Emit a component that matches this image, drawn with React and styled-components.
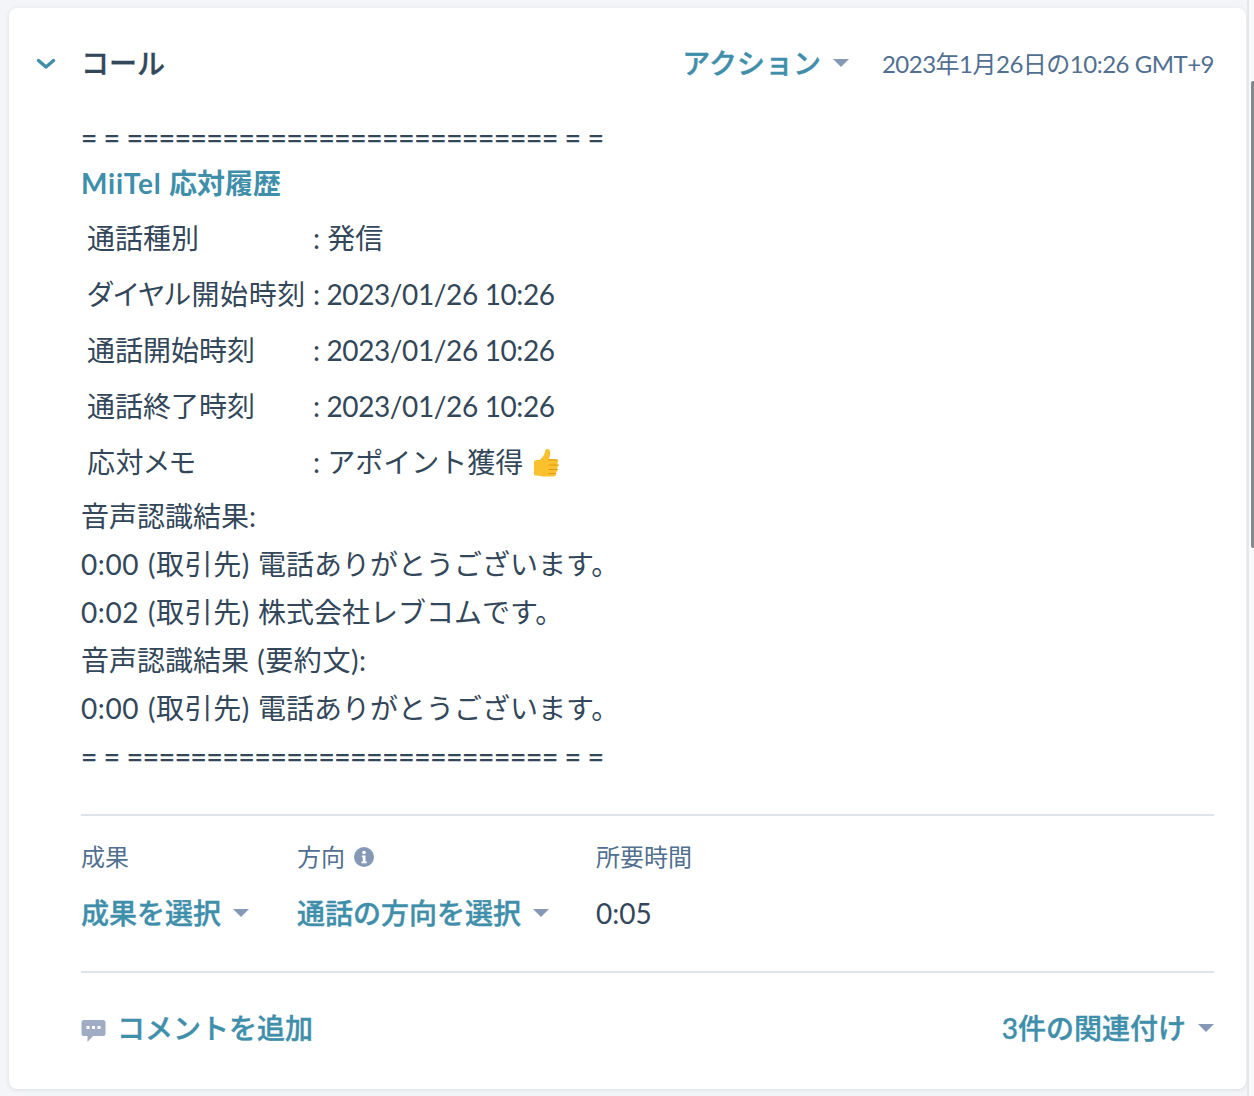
import React from "react";
import styled, { createGlobalStyle } from "styled-components";

const GlobalStyle = createGlobalStyle`
  html, body {
    margin: 0;
    height: 1096px;
    overflow: hidden;
    background: #f3f5f8;
  }
  body {
    font-family: Lato, "Noto Sans CJK JP", sans-serif;
    color: #33475b;
  }
`;

const Page = styled.div`
  position: relative;
  box-sizing: border-box;
  height: 1096px;
  padding: 8px 8px 0 9px;
`;

const ScrollTrack = styled.div`
  position: absolute;
  top: 0;
  right: 0;
  bottom: 0;
  box-sizing: border-box;
  width: 7px;
  background: #f8f9fa;
  border-left: 2px solid #e6e7ea;
`;

const ScrollThumb = styled.div`
  position: absolute;
  top: 81px;
  right: 0;
  width: 3px;
  height: 467px;
  border-radius: 2px 0 0 2px;
  background: #85888c;
`;

const Card = styled.section`
  box-sizing: border-box;
  height: 1081px;
  padding: 0 32px 0 27px;
  background: #fff;
  border-radius: 8px;
  box-shadow: 0 1px 4px rgba(45, 62, 80, 0.12);
`;

const Header = styled.header`
  display: flex;
  align-items: center;
  height: 112px;
`;

const Chevron = styled.svg`
  width: 20px;
  height: 12px;
  margin-right: 25px;
  color: #3f8fab;
`;

const Title = styled.h2`
  flex: 1;
  margin: 0 0 2px;
  font-size: 28px;
  font-weight: 500;
  line-height: 40px;
  -webkit-text-stroke: 0.35px currentColor;
`;

const Link = styled.span`
  font-size: 28px;
  font-weight: 500;
  line-height: 40px;
  color: #3f8fab;
  white-space: nowrap;
  -webkit-text-stroke: 0.4px currentColor;
`;

const Caret = styled.i`
  display: inline-block;
  width: 0;
  height: 0;
  margin: 0 0 8px 12px;
  vertical-align: middle;
  border-style: solid;
  border-width: 8px 8px 0;
  border-color: #8599b6 transparent transparent;
`;

const ActionLink = styled(Link)`
  margin: 0 33px 2px 0;
`;

const Timestamp = styled.span`
  font-size: 24px;
  line-height: 40px;
  letter-spacing: -0.5px;
  color: #516f90;
  white-space: nowrap;
`;

const Body = styled.div`
  padding-left: 45px;
`;

const Rule = styled.div`
  margin-top: ${(props) => props.$top || 0}px;
  font-size: 28px;
  line-height: 48px;
  letter-spacing: -0.27px;
  white-space: pre;
  -webkit-text-stroke: 0.3px currentColor;
`;

const Heading = styled.div`
  margin-bottom: 5px;
  font-size: 28px;
  font-weight: 700;
  line-height: 44px;
  color: #3f8fab;
`;

const HeadingLatin = styled.span`
  letter-spacing: 0.8px;
`;

const Table = styled.table`
  margin-bottom: 2px;
  border-collapse: collapse;
  font-size: 28px;
  line-height: 48px;
`;

const Cell = styled.td`
  padding: 4px 5px;
  white-space: nowrap;
`;

const KeyCell = styled(Cell)`
  box-sizing: content-box;
  width: 221px;
  padding: 4px 0 4px 6px;
  font-feature-settings: "palt";
  letter-spacing: ${(props) => (props.$kana ? "0.6px" : "0")};
`;

const DateCell = styled(Cell)`
  letter-spacing: -0.38px;
`;

const Line = styled.div`
  font-size: 28px;
  line-height: 48px;
  word-spacing: 1px;
`;

const Stamp = styled.span`
  letter-spacing: 0.6px;
`;

const Thumb = styled.svg`
  width: 30px;
  height: 30px;
  margin-left: 8px;
  vertical-align: -5px;
`;

const Divider = styled.hr`
  margin: ${(props) => props.$top || 0}px 0 0 45px;
  border: 0;
  border-top: 2px solid #dfe3eb;
`;

const Properties = styled.div`
  display: flex;
  box-sizing: border-box;
  height: 155px;
  margin-left: 45px;
  padding-top: 19px;
`;

const Property = styled.div`
  width: ${(props) => props.$width}px;
`;

const PropertyLabel = styled.div`
  display: flex;
  align-items: center;
  gap: 9px;
  height: 40px;
  font-size: 24px;
  color: #516f90;
`;

const PropertyValue = styled.div`
  margin-top: 18px;
  font-size: 28px;
  line-height: 40px;
`;

const InfoIcon = styled.svg`
  width: 20px;
  height: 20px;
  margin-top: 4px;
`;

const Footer = styled.div`
  display: flex;
  align-items: center;
  justify-content: space-between;
  height: 110px;
  margin-left: 45px;
`;

const Comment = styled.div`
  display: flex;
  align-items: center;
  gap: 11px;
`;

const CommentIcon = styled.svg`
  width: 25px;
  height: 24px;
  margin-top: 6px;
`;

const SEP = "= = =========================== = =";

export default function App() {
  return (
    <Page>
      <GlobalStyle />
      <Card>
        <Header>
          <Chevron viewBox="0 0 20 12" fill="none">
            <path d="M2.500 2.500 10 9l7.500-6.500" stroke="currentColor" strokeWidth="3.4" strokeLinecap="round" strokeLinejoin="round" />
          </Chevron>
          <Title>コール</Title>
          <ActionLink>アクション<Caret /></ActionLink>
          <Timestamp>2023年1月26日の10:26 GMT+9</Timestamp>
        </Header>
        <Body>
          <Rule $top={-7}>{SEP}</Rule>
          <Heading><HeadingLatin>MiiTel </HeadingLatin>応対履歴</Heading>
          <Table>
            <tbody>
              <tr><KeyCell>通話種別</KeyCell><Cell>: 発信</Cell></tr>
              <tr><KeyCell $kana>ダイヤル開始時刻</KeyCell><DateCell>: 2023/01/26 10:26</DateCell></tr>
              <tr><KeyCell>通話開始時刻</KeyCell><DateCell>: 2023/01/26 10:26</DateCell></tr>
              <tr><KeyCell>通話終了時刻</KeyCell><DateCell>: 2023/01/26 10:26</DateCell></tr>
              <tr>
                <KeyCell $kana>応対メモ</KeyCell>
                <Cell>
                  : アポイント獲得
                  <Thumb viewBox="0 0 30 30">
                    <path d="M3 14.500c0-1.500 1-2.500 2.500-2.500h3c2.500-2 5-5 5.500-8 .3-2 1-3 2.300-3 2 0 3.200 2 3 4.500-.2 2-.8 3.500-1.300 5.500h6c2 0 3 1.300 3 2.800 0 1-.5 1.800-1 2.200.6.500 1 1.200 1 2.100 0 1-.6 1.900-1.300 2.300.4.500.6 1.100.6 1.800 0 1-.6 1.800-1.400 2.200.2.400.3.800.3 1.200 0 1.500-1.200 2.900-3 2.900H12c-2.500 0-3.500-1-5-1H5.500C4 28 3 27 3 25.500z" fill="#fbc02d" />
                    <path d="M17.500 12h9M18 17h9.500M18 21.500h8.500M18 25.500h6.500" stroke="#e09a12" strokeWidth="1.200" strokeLinecap="round" fill="none" />
                  </Thumb>
                </Cell>
              </tr>
            </tbody>
          </Table>
          <Line>音声認識結果:</Line>
          <Line><Stamp>0:00 (取引先)</Stamp> 電話ありがとうございます。</Line>
          <Line><Stamp>0:02 (取引先)</Stamp> 株式会社レブコムです。</Line>
          <Line>音声認識結果 <Stamp>(要約文):</Stamp></Line>
          <Line><Stamp>0:00 (取引先)</Stamp> 電話ありがとうございます。</Line>
          <Rule>{SEP}</Rule>
        </Body>
        <Divider $top={34} />
        <Properties>
          <Property $width={216}>
            <PropertyLabel>成果</PropertyLabel>
            <PropertyValue><Link>成果を選択<Caret /></Link></PropertyValue>
          </Property>
          <Property $width={299}>
            <PropertyLabel>
              方向
              <InfoIcon viewBox="0 0 20 20">
                <circle cx="10" cy="10" r="10" fill="#8599b6" />
                <circle cx="10" cy="5.500" r="1.800" fill="#fff" />
                <path d="M7.800 8.500h3.700v6h1.200v1.800H7.500v-1.800h1.300v-4.200h-1z" fill="#fff" />
              </InfoIcon>
            </PropertyLabel>
            <PropertyValue><Link>通話の方向を選択<Caret /></Link></PropertyValue>
          </Property>
          <Property $width={200}>
            <PropertyLabel>所要時間</PropertyLabel>
            <PropertyValue>0:05</PropertyValue>
          </Property>
        </Properties>
        <Divider />
        <Footer>
          <Comment>
            <CommentIcon viewBox="0 0 25 24">
              <path d="M3 1h19a2.500 2.500 0 0 1 2.500 2.500v11A2.500 2.500 0 0 1 22 17H12l-5.500 6v-6H3A2.500 2.500 0 0 1 .5 14.500v-11A2.500 2.500 0 0 1 3 1z" fill="#a0acc3" />
              <rect x="5.500" y="7" width="3" height="3" fill="#fff" />
              <rect x="11" y="7" width="3" height="3" fill="#fff" />
              <rect x="16.500" y="7" width="3" height="3" fill="#fff" />
            </CommentIcon>
            <Link>コメントを追加</Link>
          </Comment>
          <Link>3件の関連付け<Caret /></Link>
        </Footer>
      </Card>
      <ScrollTrack />
      <ScrollThumb />
    </Page>
  );
}
